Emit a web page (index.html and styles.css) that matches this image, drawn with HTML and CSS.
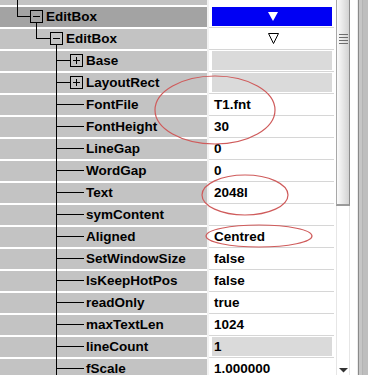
FILE: index.html
```html
<!DOCTYPE html>
<html lang="en">

<head>
	<meta charset="UTF-8">
	<meta name="viewport" content="width=device-width, initial-scale=1.0">
	<title>Properties</title>
	<link rel="stylesheet" href="styles.css">
</head>

<body>
	<div class="panel">
		<div class="rows">
			<div class="row partial">
				<div class="label"></div>
				<div class="value"></div>
			</div>
			<div class="row">
				<div class="label lv0 dark">
					<svg class="exp" width="13" height="13"><rect x=".5" y=".5" width="12" height="12" fill="none" stroke="#000"/><path d="M3 6.5h7" stroke="#000"/></svg>
					<span>EditBox</span>
				</div>
				<div class="value"><div class="fill blue"><svg width="10" height="9"><path d="M0 0h10L5 9z" fill="#fff"/></svg></div></div>
			</div>
			<div class="row">
				<div class="label lv1">
					<svg class="exp" width="13" height="13"><rect x=".5" y=".5" width="12" height="12" fill="none" stroke="#000"/><path d="M3 6.5h7" stroke="#000"/></svg>
					<span>EditBox</span>
				</div>
				<div class="value"><div class="fill center"><svg width="11" height="11"><path d="M.5 .5h10L5.5 10.5z" fill="none" stroke="#000"/></svg></div></div>
			</div>
			<div class="row">
				<div class="label lv2">
					<svg class="exp" width="13" height="13"><rect x=".5" y=".5" width="12" height="12" fill="none" stroke="#000"/><path d="M3 6.5h7M6.5 3v7" stroke="#000"/></svg>
					<span>Base</span>
				</div>
				<div class="value"><div class="fill grey"></div></div>
			</div>
			<div class="row">
				<div class="label lv2">
					<svg class="exp" width="13" height="13"><rect x=".5" y=".5" width="12" height="12" fill="none" stroke="#000"/><path d="M3 6.5h7M6.5 3v7" stroke="#000"/></svg>
					<span>LayoutRect</span>
				</div>
				<div class="value"><div class="fill grey"></div></div>
			</div>
			<div class="row">
				<div class="label lv2 leaf"><span>FontFile</span></div>
				<div class="value"><div class="fill">T1.fnt</div></div>
			</div>
			<div class="row">
				<div class="label lv2 leaf"><span>FontHeight</span></div>
				<div class="value"><div class="fill">30</div></div>
			</div>
			<div class="row">
				<div class="label lv2 leaf"><span>LineGap</span></div>
				<div class="value"><div class="fill">0</div></div>
			</div>
			<div class="row">
				<div class="label lv2 leaf"><span>WordGap</span></div>
				<div class="value"><div class="fill">0</div></div>
			</div>
			<div class="row">
				<div class="label lv2 leaf"><span>Text</span></div>
				<div class="value"><div class="fill">2048l</div></div>
			</div>
			<div class="row">
				<div class="label lv2 leaf"><span>symContent</span></div>
				<div class="value"><div class="fill"></div></div>
			</div>
			<div class="row">
				<div class="label lv2 leaf"><span>Aligned</span></div>
				<div class="value"><div class="fill">Centred</div></div>
			</div>
			<div class="row">
				<div class="label lv2 leaf"><span>SetWindowSize</span></div>
				<div class="value"><div class="fill">false</div></div>
			</div>
			<div class="row">
				<div class="label lv2 leaf"><span>IsKeepHotPos</span></div>
				<div class="value"><div class="fill">false</div></div>
			</div>
			<div class="row">
				<div class="label lv2 leaf"><span>readOnly</span></div>
				<div class="value"><div class="fill">true</div></div>
			</div>
			<div class="row">
				<div class="label lv2 leaf"><span>maxTextLen</span></div>
				<div class="value"><div class="fill">1024</div></div>
			</div>
			<div class="row">
				<div class="label lv2 leaf"><span>lineCount</span></div>
				<div class="value"><div class="fill grey">1</div></div>
			</div>
			<div class="row">
				<div class="label lv2 leaf"><span>fScale</span></div>
				<div class="value"><div class="fill">1.000000</div></div>
			</div>
		</div>
		<div class="scroll">
			<div class="track">
				<div class="thumb">
					<i></i><i></i><i></i><i></i>
				</div>
				<svg class="arrow" width="9" height="5"><path d="M0 0h9L4.5 4.5z" fill="#333"/></svg>
			</div>
			<div class="edge"></div>
		</div>
		<svg class="marks" width="368" height="375">
			<ellipse cx="215" cy="110" rx="60" ry="34" />
			<ellipse cx="245" cy="195" rx="43" ry="20" />
			<ellipse cx="259" cy="236" rx="53" ry="11" />
		</svg>
	</div>
</body>

</html>
```

FILE: styles.css
```css
* {
	padding: 0;
	margin: 0;
	box-sizing: border-box;
}

body {
	width: 368px;
	height: 375px;
	overflow: hidden;
	background: #fff;
	font-family: "Liberation Sans", Arial, sans-serif;
	font-weight: bold;
	font-size: 13.5px;
	color: #000;
}

.panel {
	position: relative;
	display: flex;
	width: 368px;
	height: 375px;
	overflow: hidden;
}

.rows {
	width: 334px;
	flex: none;
}

.row {
	display: flex;
	height: 22px;
}

.row.partial {
	height: 7px;
}

/* label cell: tree guide lines on top, white separator, grey fill */
.label {
	width: 207px;
	flex: none;
	display: flex;
	align-items: flex-start;
	line-height: 20px;
	white-space: nowrap;
	overflow: hidden;
	background: var(--lines, none), linear-gradient(#fff, #fff) 0 100% / 100% 2px no-repeat, var(--fill, #c3c3c3);
}

.label.dark {
	--fill: #a3a3a3;
}

.partial .label {
	--lines: linear-gradient(#000, #000) 17px 0 / 1px 100% no-repeat;
}

.lv0 {
	padding-left: 30px;
	--lines: linear-gradient(#000, #000) 17px 0 / 1px 10px no-repeat,
		linear-gradient(#000, #000) 17px 9px / 13px 1px no-repeat,
		linear-gradient(#000, #000) 36px 15px / 1px 7px no-repeat;
}

.lv1 {
	padding-left: 50px;
	--lines: linear-gradient(#000, #000) 36px 0 / 1px 10px no-repeat,
		linear-gradient(#000, #000) 36px 9px / 14px 1px no-repeat,
		linear-gradient(#000, #000) 56px 15px / 1px 7px no-repeat;
}

.lv2 {
	padding-left: 70px;
	--lines: linear-gradient(#000, #000) 56px 0 / 1px 100% no-repeat,
		linear-gradient(#000, #000) 56px 9px / 14px 1px no-repeat;
}

.lv2.leaf {
	padding-left: 86px;
	--lines: linear-gradient(#000, #000) 56px 0 / 1px 100% no-repeat,
		linear-gradient(#000, #000) 56px 9px / 28px 1px no-repeat;
}

.exp {
	flex: none;
	margin-top: 3px;
	margin-right: 3px;
}

.value {
	width: 127px;
	flex: none;
	padding: 0 2px 0 5px;
	background: linear-gradient(#f2f2f2, #f2f2f2) 0 0 / 2px 100% no-repeat,
		linear-gradient(#d6d6d6, #d6d6d6) 0 20px / 100% 1px no-repeat, #fff;
}

.fill {
	height: 19px;
	line-height: 20px;
	padding-left: 2px;
	white-space: nowrap;
}

.fill.grey {
	background: #dadada;
}

.fill.blue {
	background: #0000f4;
	display: flex;
	align-items: center;
	justify-content: center;
}

.fill.center {
	display: flex;
	align-items: center;
	justify-content: center;
}

.scroll {
	flex: 1;
	display: flex;
}

.track {
	width: 23px;
	flex: none;
	display: flex;
	flex-direction: column;
	padding-left: 2px;
	padding-bottom: 2px;
	background: linear-gradient(#e6e6e6, #e6e6e6) 2px 0 / 1px 100% no-repeat,
		linear-gradient(#e6e6e6, #e6e6e6) 15px 0 / 1px 100% no-repeat, #fff;
}

.thumb {
	width: 14px;
	height: 206px;
	display: flex;
	flex-direction: column;
	gap: 2px;
	padding: 34px 0 0 2px;
	border-left: 1px solid #a8a8a8;
	border-right: 1px solid #8c8c8c;
	border-bottom: 2px solid #9a9a9a;
	background: linear-gradient(to right, #fbfbfb, #d2d2d2);
}

.thumb i {
	display: block;
	width: 9px;
	height: 1px;
	background: #6c6c6c;
}

.arrow {
	margin-top: auto;
	margin-left: 3px;
}

.edge {
	flex: 1;
	background: linear-gradient(to right, #ececec 0 1px, #8a8a8a 1px 2px, #c6c6c6 2px 5px, #b4b4b4 5px 6px, #bebebe 6px);
}

.marks {
	position: absolute;
	left: 0;
	top: 0;
	pointer-events: none;
}

.marks ellipse {
	fill: none;
	stroke: #cf5b5b;
	stroke-width: 1.2;
}
```
